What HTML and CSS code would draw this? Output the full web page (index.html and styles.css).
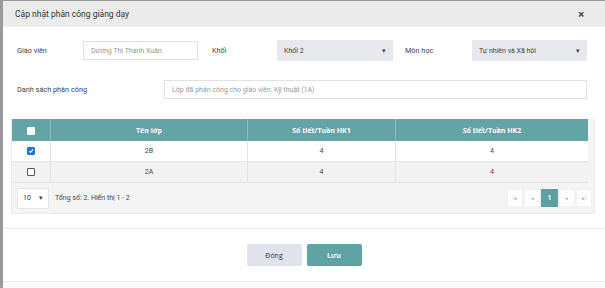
FILE: index.html
```html
<!DOCTYPE html>
<html>
<head>
    <title>Cập nhật phân công giảng dạy</title>
    <meta charset="UTF-8">
    <link rel="stylesheet" href="styles.css">
</head>
<body>
    <div class="modal">
        <div class="modal-header">
            <span class="modal-title">Cập nhật phân công giảng dạy</span>
            <span class="close">&times;</span>
        </div>

        <div class="modal-body">
            <div class="form-row">
                <label class="lbl lbl-gv">Giáo viên</label>
                <div class="input input-gv">Dương Thị Thanh Xuân</div>
                <label class="lbl lbl-khoi">Khối</label>
                <div class="select select-khoi">Khối 2<span class="caret">&#9662;</span></div>
                <label class="lbl lbl-mon">Môn học</label>
                <div class="select select-mon">Tự nhiên và Xã hội<span class="caret">&#9662;</span></div>
            </div>
            <div class="form-row row2">
                <label class="lbl lbl-ds">Danh sách phân công</label>
                <div class="input input-ds">Lớp đã phân công cho giáo viên: Kỹ thuật (1A)</div>
            </div>

            <div class="grid">
                <table>
                    <thead>
                        <tr>
                            <th class="col-check"><span class="cb"></span></th>
                            <th class="col-name">Tên lớp</th>
                            <th class="col-hk">Số tiết/Tuần HK1</th>
                            <th class="col-hk2">Số tiết/Tuần HK2</th>
                        </tr>
                    </thead>
                    <tbody>
                        <tr>
                            <td><span class="cb checked"><svg width="7" height="7" viewBox="0 0 7 7"><path d="M1.2 3.6 L2.9 5.2 L5.9 1.6" fill="none" stroke="#fff" stroke-width="1.4"/></svg></span></td>
                            <td>2B</td>
                            <td>4</td>
                            <td>4</td>
                        </tr>
                        <tr class="alt">
                            <td><span class="cb"></span></td>
                            <td>2A</td>
                            <td>4</td>
                            <td>4</td>
                        </tr>
                    </tbody>
                </table>
                <div class="pager">
                    <div class="pager-left">
                        <div class="page-size">10<span class="caret">&#9662;</span></div>
                        <span class="pager-info">Tổng số: 2. Hiển thị 1 - 2</span>
                    </div>
                    <div class="pager-btns">
                        <span class="pbtn">&#124;&#9666;</span>
                        <span class="pbtn">&#9666;</span>
                        <span class="pbtn active">1</span>
                        <span class="pbtn">&#9656;</span>
                        <span class="pbtn">&#9656;&#124;</span>
                    </div>
                </div>
            </div>
        </div>

        <div class="modal-footer">
            <button class="btn btn-close">Đóng</button>
            <button class="btn btn-save">Lưu</button>
        </div>
        <div class="modal-bottom"></div>
    </div>
</body>
</html>
```

FILE: styles.css
```css
body {
    margin: 0;
    background-color: #9a9a9a;
    font-family: Roboto, "Open Sans", sans-serif;
    color: #333;
    width: 605px;
    height: 288px;
    overflow: hidden;
}
.modal {
    margin: 1px 0 0 3px;
    background-color: #fff;
    height: 287px;
}
.modal-header {
    height: 26px;
    background-color: #ebebeb;
    display: flex;
    align-items: center;
    justify-content: space-between;
    padding: 0 21px 0 12px;
}
.modal-title {
    font-size: 8.5px;
    color: #333;
}
.close {
    font-size: 11px;
    font-weight: bold;
    color: #444;
}
.modal-body {
    padding: 13px 0 0 0;
    height: 188px;
    border-bottom: 1px solid #eaeaea;
}
.form-row {
    display: flex;
    align-items: center;
    height: 21px;
}
.row2 {
    margin-top: 19px;
    height: 19px;
}
.lbl {
    font-size: 7.3px;
    color: #444;
}
.lbl-gv {
    margin-left: 14px;
    width: 66px;
}
.lbl-khoi {
    margin-left: 14px;
    width: 65px;
}
.lbl-mon {
    margin-left: 12px;
    width: 67px;
}
.lbl-ds {
    margin-left: 14px;
    width: 147px;
}
.input {
    box-sizing: border-box;
    height: 19px;
    border: 1px solid #e2e2e2;
    font-size: 7px;
    color: #999;
    padding-left: 7px;
    display: flex;
    align-items: center;
}
.input-gv {
    width: 115px;
}
.input-ds {
    width: 423px;
}
.select {
    box-sizing: border-box;
    height: 21px;
    background-color: #e8e9ee;
    font-size: 7px;
    color: #444;
    padding: 0 7px;
    display: flex;
    align-items: center;
    justify-content: space-between;
}
.select-khoi {
    width: 116px;
}
.select-mon {
    width: 115px;
}
.caret {
    font-size: 7px;
    color: #444;
}
.grid {
    margin: 20px 10px 0 8px;
    padding-right: 6px;
    border: 1px solid #ececec;
    border-top: none;
    background-color: #f4f4f4;
}
table {
    width: 100%;
    border-collapse: collapse;
    font-size: 7px;
    text-align: center;
}
th {
    background-color: #64a3a6;
    color: #fff;
    font-family: "Open Sans", sans-serif;
    font-weight: bold;
    height: 22px;
    padding: 0;
    border-right: 1px solid #8fbdc0;
}
th:last-child {
    border-right: none;
}
td {
    height: 20px;
    padding: 0;
    background-color: #fff;
    border-right: 1px solid #e2e2e2;
    border-bottom: 1px solid #e6e6e6;
    color: #444;
}
td:last-child {
    border-right: none;
}
tr.alt td {
    background-color: #f2f2f2;
}
.col-check {
    width: 38px;
}
.col-name {
    width: 196px;
}
.col-hk {
    width: 147px;
}
.cb {
    display: inline-block;
    width: 6px;
    height: 6px;
    border: 1px solid #555;
    border-radius: 1px;
    background-color: #fff;
    vertical-align: middle;
    position: relative;
}
th .cb {
    border-color: #fff;
}
.cb.checked {
    background-color: #1a73e8;
    border-color: #1a73e8;
}
.cb svg {
    position: absolute;
    left: 0;
    top: 0;
    width: 6px;
    height: 6px;
}
.pager {
    display: flex;
    justify-content: space-between;
    align-items: center;
    height: 30px;
    padding: 0 0 0 5px;
    margin-right: -4px;
}
.pager-left {
    display: flex;
    align-items: center;
}
.page-size {
    box-sizing: border-box;
    width: 32px;
    height: 21px;
    background-color: #fff;
    border: 1px solid #e6e6e6;
    font-size: 7px;
    display: flex;
    align-items: center;
    justify-content: space-between;
    padding: 0 5px 0 5px;
}
.pager-info {
    font-size: 7px;
    margin-left: 6px;
    color: #444;
}
.pager-btns {
    display: flex;
    gap: 1px;
}
.pbtn {
    box-sizing: border-box;
    width: 16px;
    height: 18px;
    background-color: #fff;
    border: 1px solid #eef0f2;
    font-size: 5px;
    color: #8aa;
    display: flex;
    align-items: center;
    justify-content: center;
}
.pbtn.active {
    width: 17px;
    background-color: #5f9fa2;
    border-color: #5f9fa2;
    color: #fff;
    font-size: 7px;
    font-weight: bold;
}
.modal-footer {
    display: flex;
    justify-content: center;
    gap: 5px;
    padding-top: 15px;
    height: 37px;
}
.btn {
    width: 55px;
    height: 22px;
    border: none;
    border-radius: 2px;
    font-family: "Open Sans", sans-serif;
    font-size: 7px;
    padding: 0;
}
.btn-close {
    background-color: #e1e3ec;
    color: #333;
}
.btn-save {
    background-color: #5fa4a4;
    color: #fff;
    font-weight: bold;
}
.modal-bottom {
    border-top: 1px solid #efefef;
    height: 6px;
    background-color: #fafafa;
}
```
